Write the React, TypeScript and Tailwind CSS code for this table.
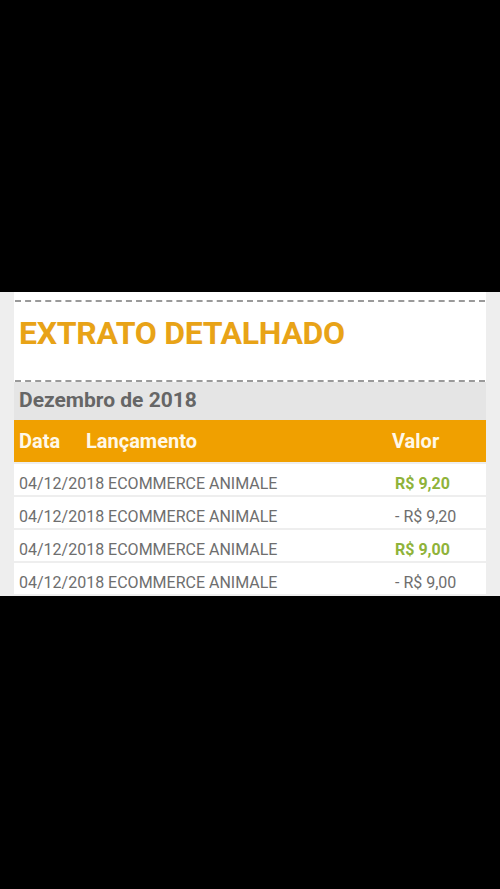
import React from "react";

type Row = { date: string; desc: string; value: string; credit: boolean };

const rows: Row[] = [
  { date: "04/12/2018", desc: "ECOMMERCE ANIMALE", value: "R$ 9,20", credit: true },
  { date: "04/12/2018", desc: "ECOMMERCE ANIMALE", value: "- R$ 9,20", credit: false },
  { date: "04/12/2018", desc: "ECOMMERCE ANIMALE", value: "R$ 9,00", credit: true },
  { date: "04/12/2018", desc: "ECOMMERCE ANIMALE", value: "- R$ 9,00", credit: false },
];

const App: React.FC = () => {
  return (
    <div className="w-[500px] h-[889px] bg-black flex flex-col font-['Roboto',sans-serif]">
      <div className="h-[292px] shrink-0" />
      <div className="bg-[#eeeeee] px-[14px] h-[304px] overflow-hidden">
        <div className="bg-white pt-[8px]">
          <div className="border-t-2 border-dashed border-[#9a9a9a] mx-[1px]" />
          <h1 className="h-[78px] pl-[5px] pt-[14px] text-[32px] leading-[34px] font-bold text-[#e8a317] tracking-[-0.3px]">
            EXTRATO DETALHADO
          </h1>
          <div className="border-t-2 border-dashed border-[#9a9a9a] mx-[1px]" />
        </div>
        <div className="bg-[#e5e5e5] h-[38px] pl-[5px] pt-[4px] text-[21px] leading-[28px] font-bold text-[#666666]">
          Dezembro de 2018
        </div>
        <div className="bg-[#f0a000] h-[42px] flex items-center text-[20px] font-bold text-[#fff8e8]">
          <span className="pl-[5px] w-[72px]">Data</span>
          <span className="flex-1">Lançamento</span>
          <span className="w-[94px]">Valor</span>
        </div>
        <div className="flex flex-col">
          {rows.map((r, i) => (
            <div
              key={i}
              className="bg-white h-[31px] mt-[2px] pt-[8px] flex items-center text-[16px] text-[#6e6e6e]"
            >
              <span className="pl-[5px] flex-1">
                {r.date} {r.desc}
              </span>
              <span
                className={
                  r.credit
                    ? "w-[94px] pl-[3px] font-bold text-[#8fb33a]"
                    : "w-[94px] pl-[3px]"
                }
              >
                {r.value}
              </span>
            </div>
          ))}
        </div>
      </div>
    </div>
  );
};

export default App;
